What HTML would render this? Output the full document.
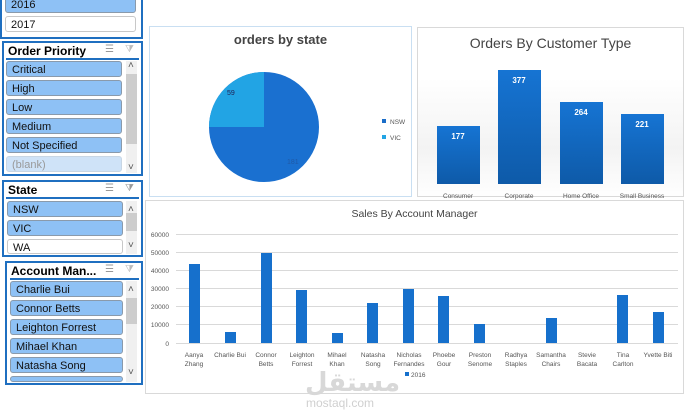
<!DOCTYPE html>
<html><head><style>
body{margin:0;width:695px;height:413px;background:#fff;font-family:"Liberation Sans",sans-serif;position:relative;overflow:hidden}
.a{position:absolute}
.sl{position:absolute;border:2px solid #1f6fc0;background:#fff;box-sizing:border-box}
.hd{position:absolute;left:4px;font-weight:bold;font-size:12px;color:#000}
.ln{position:absolute;left:4px;height:2px;background:#1f6fc0}
.it{position:absolute;height:16px;background:#8ec1f5;border:1px solid #8a9aab;border-radius:3px;font-size:11px;line-height:16px;padding-left:5px;box-sizing:border-box;color:#111}
.wt{background:#fff;border-color:#c8c8c8}
.sb{position:absolute;width:11px;background:#f0f0f0}
.th{position:absolute;width:11px;background:#cdcdcd}
.ic{position:absolute;font-size:10px;color:#999}
.box{position:absolute;border:1px solid #d9d9d9;background:#fff;box-sizing:border-box}
.tx{position:absolute;font-size:7px;color:#555;text-align:center;line-height:9px}
</style></head><body>
<!-- year slicer -->
<div class="sl" style="left:0;top:-4px;width:143px;height:43px;border-top:none"></div>
<div class="it" style="left:5px;top:-4px;width:131px;height:17px">2016</div>
<div class="it wt" style="left:5px;top:16px;width:131px">2017</div>
<!-- order priority -->
<div class="sl" style="left:2px;top:41px;width:141px;height:135px"></div>
<div class="hd" style="left:8px;top:44px">Order Priority</div>
<div class="ic" style="left:105px;top:44px">☰</div><div class="ic" style="left:125px;top:44px;color:#bbb">⧩</div>
<div class="ln" style="left:6px;top:58px;width:133px"></div>
<div class="it" style="left:6px;top:61px;width:116px">Critical</div>
<div class="it" style="left:6px;top:80px;width:116px">High</div>
<div class="it" style="left:6px;top:99px;width:116px">Low</div>
<div class="it" style="left:6px;top:118px;width:116px">Medium</div>
<div class="it" style="left:6px;top:137px;width:116px">Not Specified</div>
<div class="it" style="left:6px;top:156px;width:116px;background:#cfe3f8;border-color:#c8d6e4;color:#999">(blank)</div>
<div class="sb" style="left:126px;top:61px;height:112px"></div><div class="th" style="left:126px;top:74px;height:70px"></div>
<div class="ic" style="left:128px;top:60px;color:#555">˄</div><div class="ic" style="left:128px;top:162px;color:#555">˅</div>
<!-- state -->
<div class="sl" style="left:2px;top:180px;width:141px;height:77px"></div>
<div class="hd" style="left:8px;top:183px">State</div>
<div class="ic" style="left:105px;top:183px">☰</div><div class="ic" style="left:125px;top:183px">⧩</div>
<div class="ln" style="left:6px;top:197px;width:133px"></div>
<div class="it" style="left:7px;top:201px;width:116px">NSW</div>
<div class="it" style="left:7px;top:220px;width:116px">VIC</div>
<div class="it wt" style="left:7px;top:239px;width:116px;height:15px">WA</div>
<div class="sb" style="left:126px;top:201px;height:53px"></div><div class="th" style="left:126px;top:213px;height:18px"></div>
<div class="ic" style="left:128px;top:204px;color:#555">˄</div><div class="ic" style="left:128px;top:240px;color:#555">˅</div>
<!-- account manager -->
<div class="sl" style="left:5px;top:261px;width:138px;height:124px"></div>
<div class="hd" style="left:11px;top:264px">Account Man...</div>
<div class="ic" style="left:105px;top:264px">☰</div><div class="ic" style="left:125px;top:264px;color:#bbb">⧩</div>
<div class="ln" style="left:10px;top:278px;width:129px"></div>
<div class="it" style="left:10px;top:281px;width:113px">Charlie Bui</div>
<div class="it" style="left:10px;top:300px;width:113px">Connor Betts</div>
<div class="it" style="left:10px;top:319px;width:113px">Leighton Forrest</div>
<div class="it" style="left:10px;top:338px;width:113px">Mihael Khan</div>
<div class="it" style="left:10px;top:357px;width:113px">Natasha Song</div>
<div class="it" style="left:10px;top:376px;width:113px;height:6px"></div>
<div class="sb" style="left:126px;top:281px;height:101px"></div><div class="th" style="left:126px;top:298px;height:26px"></div>
<div class="ic" style="left:128px;top:284px;color:#555">˄</div><div class="ic" style="left:128px;top:367px;color:#555">˅</div>
<!-- pie -->
<div class="box" style="left:149px;top:26px;width:263px;height:171px;border-color:#c9dff2"></div>
<div class="a" style="left:149px;top:32px;width:263px;text-align:center;font-weight:bold;font-size:13px;color:#444">orders by state</div>
<svg class="a" style="left:0;top:0" width="695" height="413">
<circle cx="264" cy="127" r="55" fill="#1a70d0"/>
<path d="M264 127 L264 72 A55 55 0 0 0 209 127 Z" fill="#22a4e4"/>
<text x="227" y="95" font-size="7" fill="#225" font-family="Liberation Sans">59</text>
<text x="287" y="164" font-size="7" fill="#1f5aa8" font-family="Liberation Sans">181</text>
<rect x="382" y="119" width="4" height="4" fill="#1a6dc8"/><text x="390" y="124" font-size="6.5" fill="#555" font-family="Liberation Sans">NSW</text>
<rect x="382" y="135" width="4" height="4" fill="#22a4e4"/><text x="390" y="140" font-size="6.5" fill="#555" font-family="Liberation Sans">VIC</text>
</svg>
<!-- customer type -->
<div class="box" style="left:417px;top:27px;width:267px;height:170px;background:linear-gradient(#fff 50px,#f3f3f3 120px,#fff 170px)"></div>
<div class="a" style="left:417px;top:35px;width:267px;text-align:center;font-size:14px;color:#444">Orders By Customer Type</div>
<svg class="a" style="left:0;top:0" width="695" height="413">
<defs><linearGradient id="g" x1="0" y1="0" x2="0" y2="1"><stop offset="0" stop-color="#1674d3"/><stop offset="1" stop-color="#0e5aa8"/></linearGradient></defs>
<rect x="437" y="126" width="43" height="58" fill="url(#g)"/>
<rect x="498" y="70" width="43" height="114" fill="url(#g)"/>
<rect x="560" y="102" width="43" height="82" fill="url(#g)"/>
<rect x="621" y="114" width="43" height="70" fill="url(#g)"/>
<g font-family="Liberation Sans" font-size="8" font-weight="bold" fill="#fff" text-anchor="middle">
<text x="458" y="139">177</text><text x="519" y="83">377</text><text x="581" y="115">264</text><text x="642" y="127">221</text></g>
<g font-family="Liberation Sans" font-size="6.5" fill="#555" text-anchor="middle">
<text x="458" y="198">Consumer</text><text x="519" y="198">Corporate</text><text x="581" y="198">Home Office</text><text x="642" y="198">Small Business</text></g>
</svg>
<!-- sales -->
<div class="box" style="left:145px;top:200px;width:539px;height:194px"></div>
<div class="a" style="left:145px;top:208px;width:539px;text-align:center;font-size:10.5px;color:#444">Sales By Account Manager</div>
<svg class="a" style="left:0;top:0" width="695" height="413">
<g stroke="#d9d9d9" stroke-width="1">
<line x1="176" x2="678" y1="234.5" y2="234.5"/><line x1="176" x2="678" y1="252.5" y2="252.5"/><line x1="176" x2="678" y1="270.5" y2="270.5"/><line x1="176" x2="678" y1="288.5" y2="288.5"/><line x1="176" x2="678" y1="306.5" y2="306.5"/><line x1="176" x2="678" y1="324.5" y2="324.5"/><line x1="176" x2="678" y1="343.5" y2="343.5"/></g>
<g font-family="Liberation Sans" font-size="6.5" fill="#555" text-anchor="end">
<text x="169" y="237">60000</text><text x="169" y="255">50000</text><text x="169" y="273">40000</text><text x="169" y="291">30000</text><text x="169" y="309">20000</text><text x="169" y="327">10000</text><text x="169" y="346">0</text></g>
<g fill="#1670cc">
<rect x="189" y="264" width="11" height="79"/>
<rect x="225" y="332" width="11" height="11"/>
<rect x="261" y="253" width="11" height="90"/>
<rect x="296" y="290" width="11" height="53"/>
<rect x="332" y="333" width="11" height="10"/>
<rect x="367" y="303" width="11" height="40"/>
<rect x="403" y="289" width="11" height="54"/>
<rect x="438" y="296" width="11" height="47"/>
<rect x="474" y="324" width="11" height="19"/>
<rect x="546" y="318" width="11" height="25"/>
<rect x="617" y="295" width="11" height="48"/>
<rect x="653" y="312" width="11" height="31"/></g>
<g font-family="Liberation Sans" font-size="6.5" fill="#555" text-anchor="middle">
<text x="194" y="357">Aanya</text><text x="194" y="366">Zhang</text>
<text x="230" y="357">Charlie Bui</text>
<text x="266" y="357">Connor</text><text x="266" y="366">Betts</text>
<text x="302" y="357">Leighton</text><text x="302" y="366">Forrest</text>
<text x="337" y="357">Mihael</text><text x="337" y="366">Khan</text>
<text x="373" y="357">Natasha</text><text x="373" y="366">Song</text>
<text x="409" y="357">Nicholas</text><text x="409" y="366">Fernandes</text>
<text x="444" y="357">Phoebe</text><text x="444" y="366">Gour</text>
<text x="480" y="357">Preston</text><text x="480" y="366">Senome</text>
<text x="516" y="357">Radhya</text><text x="516" y="366">Staples</text>
<text x="551" y="357">Samantha</text><text x="551" y="366">Chairs</text>
<text x="587" y="357">Stevie</text><text x="587" y="366">Bacata</text>
<text x="623" y="357">Tina</text><text x="623" y="366">Carlton</text>
<text x="658" y="357">Yvette Biti</text></g>
<rect x="405" y="372" width="4" height="4" fill="#1670cc"/><text x="411" y="377" font-size="6.5" fill="#555" font-family="Liberation Sans">2016</text>
</svg>
<div class="a" style="left:305px;top:368px;font-size:26px;font-weight:bold;color:#d8d8d8;font-family:'DejaVu Sans',sans-serif">مستقل</div>
<div class="a" style="left:306px;top:396px;font-size:12px;color:#d0d0d0">mostaql.com</div>
</body></html>
